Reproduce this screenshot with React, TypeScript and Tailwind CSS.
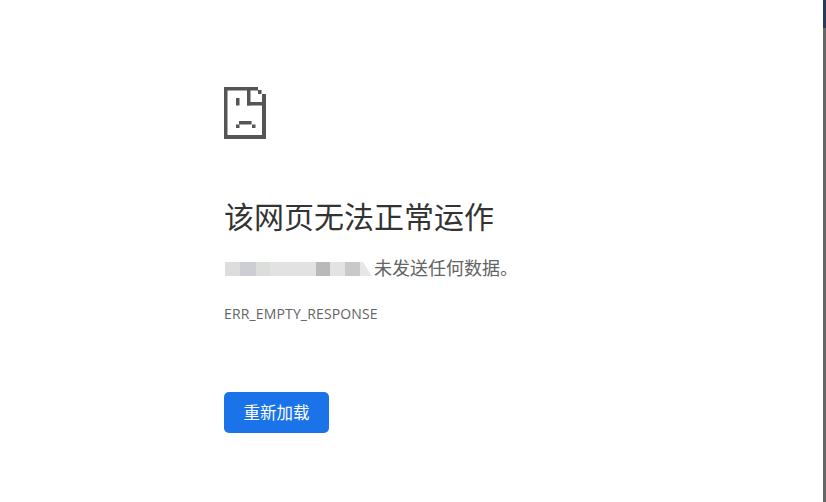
const blurBlocks = [
  { w: "w-[15px]", bg: "bg-[#dddddd]" },
  { w: "w-[16px]", bg: "bg-[#cdcdd4]" },
  { w: "w-[14px]", bg: "bg-[#dcdedc]" },
  { w: "w-[46px]", bg: "bg-[#e2e2e2]" },
  { w: "w-[14px]", bg: "bg-[#b9b9b9]" },
  { w: "w-[15px]", bg: "bg-[#e2e4e2]" },
  { w: "w-[15px]", bg: "bg-[#c9c9c9]" },
];

function SadPage() {
  return (
    <svg width="42" height="52" viewBox="0 0 42 52" fill="#555555">
      <rect x="0" y="0" width="34" height="3.5" />
      <rect x="0" y="0" width="3.5" height="52" />
      <rect x="0" y="48" width="42" height="4" />
      <rect x="38" y="7" width="4" height="45" />
      <rect x="23" y="0" width="3.5" height="18.5" />
      <rect x="23" y="15" width="19" height="3.5" />
      <rect x="34" y="3" width="3.5" height="4" />
      <rect x="12" y="11" width="3.5" height="7.5" />
      <rect x="15" y="34" width="12.5" height="3.5" />
      <rect x="12" y="37.5" width="3.5" height="3.5" />
      <rect x="28" y="37.5" width="3.5" height="3.5" />
    </svg>
  );
}

export default function App() {
  return (
    <div className="flex h-[502px] w-[826px] bg-white font-['Noto_Sans_CJK_SC',sans-serif] overflow-hidden">
      <main className="flex-1 pl-[224px] pt-[87px]">
        <SadPage />
        <h1 className="mt-[54px] text-[30px] leading-[44px] font-normal text-[#333333]">该网页无法正常运作</h1>
        <div className="mt-[17px] flex items-center h-[26px] text-[18px] text-[#646464]">
          <div className="ml-px mt-[4px] flex h-[14px]">
            {blurBlocks.map((b, i) => (
              <div key={i} className={`${b.w} ${b.bg}`} />
            ))}
            <svg width="12" height="14" viewBox="0 0 12 14">
              <polygon points="0,0 3,0 12,14 0,14" fill="#e4e8ea" />
            </svg>
          </div>
          <span className="ml-[2px]">未发送任何数据。</span>
        </div>
        <p className="mt-[25px] text-[14px] tracking-[0.15px] leading-[18px] text-[#646464] font-['Open_Sans',sans-serif]">ERR_EMPTY_RESPONSE</p>
        <button className="mt-[69px] w-[105px] h-[41px] rounded-[5px] bg-[#1a73e8] text-white text-[16.5px]">重新加载</button>
      </main>
      <div className="flex w-[3px] flex-col bg-[#666666]">
        <div className="h-[28px] bg-[#2a3a5c]" />
      </div>
    </div>
  );
}
